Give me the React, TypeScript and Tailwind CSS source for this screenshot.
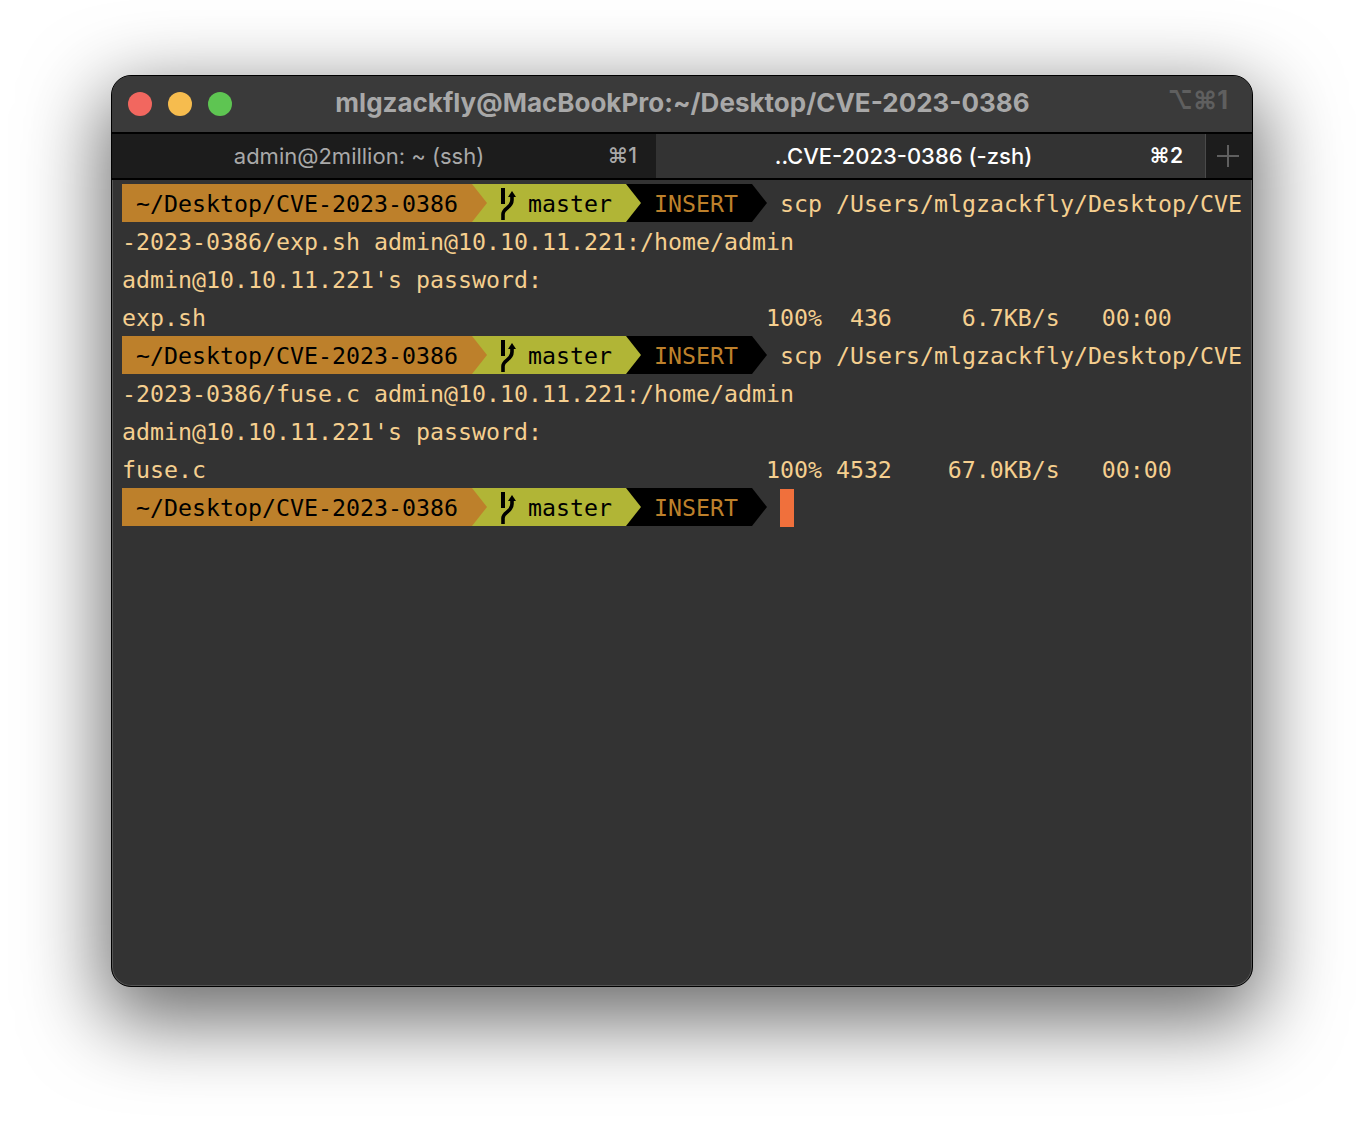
const MONO = "font-['DejaVu_Sans_Mono',monospace] text-[23.25px]";

function BranchIcon() {
  return (
    <svg className="absolute left-[28px] top-0" width="17" height="38" viewBox="0 0 17 38">
      <path d="M3 4V20" stroke="#000" strokeWidth="4" fill="none" />
      <path d="M3 36V30C3 24 12 24 12 16V10" stroke="#000" strokeWidth="3.6" fill="none" />
      <path d="M8 13L12 7L16 13Z" fill="#000" />
    </svg>
  );
}

function Arrow({ color }: { color: string }) {
  return (
    <svg className="block shrink-0" width="15" height="38" viewBox="0 0 15 38">
      <polygon points="0,0 15,19 0,38" fill={color} />
    </svg>
  );
}

function Prompt({ children }: { children?: React.ReactNode }) {
  return (
    <div className="flex h-[38px] items-center">
      <span className="flex h-full w-[350px] items-center whitespace-pre bg-[#bd802b] pl-[14px] pt-[2px] text-black">~/Desktop/CVE-2023-0386</span>
      <div className="relative flex h-full w-[154px] items-center bg-[#b1b536]">
        <Arrow color="#bd802b" />
        <BranchIcon />
        <span className="ml-[41px] pt-[2px] text-black">master</span>
      </div>
      <div className="flex h-full w-[126px] items-center bg-black">
        <Arrow color="#b1b536" />
        <span className="ml-[13px] pt-[2px] text-[#bd802b]">INSERT</span>
      </div>
      <Arrow color="#000000" />
      <span className="ml-[13px] flex h-full items-center whitespace-pre pt-[2px]">{children}</span>
    </div>
  );
}

function Line({ text }: { text: string }) {
  return <div className="flex h-[38px] items-center whitespace-pre pt-[2px]">{text}</div>;
}

export default function App() {
  return (
    <div className="flex h-[1134px] w-[1364px] items-start justify-center bg-white pt-[75px] font-['Inter',sans-serif]">
      <div className="flex h-[912px] w-[1142px] flex-col overflow-hidden rounded-[20px] border border-black bg-[#333333] shadow-[0_26px_80px_8px_rgba(0,0,0,0.58),inset_0_0_0_1px_#555555]">
        {/* title bar */}
        <div className="relative flex h-[56px] shrink-0 items-center justify-center bg-[#3a3a3a] pb-[3px] pl-[1px]">
          <div className="absolute left-[16px] top-[16px] flex gap-[16px]">
            <span className="h-[24px] w-[24px] rounded-full bg-[#f2675f]" />
            <span className="h-[24px] w-[24px] rounded-full bg-[#f6bc4e]" />
            <span className="h-[24px] w-[24px] rounded-full bg-[#5ec552]" />
          </div>
          <span className="text-[26px] font-bold text-[#a8a8a8]">mlgzackfly@MacBookPro:~/Desktop/CVE-2023-0386</span>
          <span className="absolute right-[24px] top-[6px] text-[25px] font-bold text-[#5f5f5f]">⌥⌘1</span>
        </div>
        {/* tabs */}
        <div className="flex h-[48px] shrink-0 border-y-2 border-black text-[22px]">
          <div className="relative flex w-[544px] items-center justify-center bg-[#1c1c1c] pr-[50px] text-[#a9a9a9]">
            admin@2million: ~ (ssh)
            <span className="absolute right-[19px] text-[21px] font-medium">⌘1</span>
          </div>
          <div className="relative flex w-[549px] items-center justify-center bg-[#333333] pr-[54px] font-medium text-white">
            ..CVE-2023-0386 (-zsh)
            <span className="absolute right-[22px] text-[21px] font-semibold">⌘2</span>
          </div>
          <div className="flex flex-1 items-center justify-center border-l border-[#4a4a4a] bg-[#1c1c1c] pr-[2px]">
            <svg width="22" height="22" viewBox="0 0 22 22">
              <path d="M11 0V22M0 11H22" stroke="#5f5f5f" strokeWidth="2" />
            </svg>
          </div>
        </div>
        {/* terminal */}
        <div className={`pl-[10px] pt-[4px] text-[#f5cf8f] ${MONO}`}>
          <Prompt>scp /Users/mlgzackfly/Desktop/CVE</Prompt>
          <Line text="-2023-0386/exp.sh admin@10.10.11.221:/home/admin" />
          <Line text="admin@10.10.11.221's password:" />
          <Line text="exp.sh                                        100%  436     6.7KB/s   00:00" />
          <Prompt>scp /Users/mlgzackfly/Desktop/CVE</Prompt>
          <Line text="-2023-0386/fuse.c admin@10.10.11.221:/home/admin" />
          <Line text="admin@10.10.11.221's password:" />
          <Line text="fuse.c                                        100% 4532    67.0KB/s   00:00" />
          <Prompt>
            <span className="h-[38px] w-[14px] bg-[#f0703c]" />
          </Prompt>
        </div>
      </div>
    </div>
  );
}
